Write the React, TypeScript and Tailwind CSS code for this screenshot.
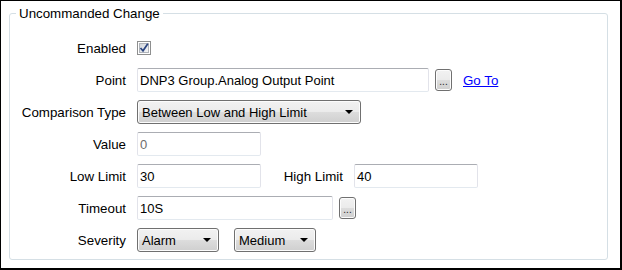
import React from "react";

const font = "font-['Liberation_Sans',Arial,sans-serif]";

const btnBg =
  "bg-[linear-gradient(to_bottom,#f2f2f2_0%,#ebebeb_50%,#dddddd_50%,#cfcfcf_100%)] border border-[#707070] rounded-[3px] shadow-[inset_0_0_0_1px_#fcfcfc]";

const labelText = "text-[13.33px] leading-[15px] text-black";

function TextBox({ value, width, muted }: { value: string; width: string; muted?: boolean }) {
  return (
    <div
      className={`${width} h-[24px] shrink-0 flex items-center pl-[2px] bg-white border border-[#e2e3ea] border-t-[#abadb3] border-b-[#e3e9ef] rounded-[2px] text-[13px] leading-[15px] ${
        muted ? "text-[#6d6d6d]" : "text-black"
      }`}
    >
      {value}
    </div>
  );
}

function Combo({ value, width }: { value: string; width: string }) {
  return (
    <div className={`${width} h-[24px] shrink-0 flex items-center justify-between pl-[4px] pr-[7px] ${btnBg} text-[13px] leading-[15px] text-black`}>
      <span>{value}</span>
      <svg width="8" height="4" viewBox="0 0 8 4">
        <path d="M0 0 H8 L4 4 Z" fill="#000" />
      </svg>
    </div>
  );
}

function DotsButton() {
  return (
    <div className={`w-[17px] h-[22px] shrink-0 flex items-end justify-center pb-[3px] ${btnBg} text-[10px] leading-[10px] text-[#222]`}>
      ...
    </div>
  );
}

function CheckBox() {
  return (
    <svg width="14" height="14" viewBox="0 0 14 14" className="shrink-0">
      <defs>
        <linearGradient id="cbg" x1="0" y1="0" x2="1" y2="1">
          <stop offset="0" stopColor="#cfd3d8" />
          <stop offset="1" stopColor="#f7f8f9" />
        </linearGradient>
      </defs>
      <rect x="0.5" y="0.5" width="13" height="13" fill="#fff" stroke="#8e8f8f" />
      <rect x="2.5" y="2.5" width="9" height="9" fill="url(#cbg)" stroke="#b0b4ba" />
      <path d="M3.5 7 L6 9.8 L10.8 2.8" fill="none" stroke="#2a4480" strokeWidth="1.7" />
    </svg>
  );
}

function Row({ label, children }: { label: string; children: React.ReactNode }) {
  return (
    <div className="flex items-center h-[24px]">
      <span className={`w-[116px] shrink-0 text-right ${labelText}`}>{label}</span>
      <div className="ml-[11px] flex items-center">{children}</div>
    </div>
  );
}

export default function App() {
  return (
    <div className={`${font} w-[622px] h-[270px] bg-white border-l border-t border-r-2 border-b-2 border-black`}>
      <fieldset className="ml-[8px] mt-[5px] w-[599px] h-[254px] border border-[#d5dfe5] rounded-[3px] pt-[15px]">
        <legend className="ml-[6px] px-[3px] text-[13.33px] leading-[15px] text-black">Uncommanded Change</legend>
        <div className="flex flex-col gap-[8px]">
          <Row label="Enabled">
            <CheckBox />
          </Row>
          <Row label="Point">
            <TextBox value="DNP3 Group.Analog Output Point" width="w-[292px]" />
            <div className="ml-[6px]">
              <DotsButton />
            </div>
            <a href="#" className="ml-[11px] text-[13.33px] leading-[15px] text-[#0000ff] underline">
              Go To
            </a>
          </Row>
          <Row label="Comparison Type">
            <Combo value="Between Low and High Limit" width="w-[224px]" />
          </Row>
          <Row label="Value">
            <TextBox value="0" width="w-[124px]" muted />
          </Row>
          <Row label="Low Limit">
            <TextBox value="30" width="w-[124px]" />
            <span className={`w-[82px] text-right ${labelText}`}>High Limit</span>
            <div className="ml-[11px]">
              <TextBox value="40" width="w-[124px]" />
            </div>
          </Row>
          <Row label="Timeout">
            <TextBox value="10S" width="w-[196px]" />
            <div className="ml-[6px]">
              <DotsButton />
            </div>
          </Row>
          <Row label="Severity">
            <Combo value="Alarm" width="w-[82px]" />
            <div className="ml-[15px]">
              <Combo value="Medium" width="w-[82px]" />
            </div>
          </Row>
        </div>
      </fieldset>
    </div>
  );
}
